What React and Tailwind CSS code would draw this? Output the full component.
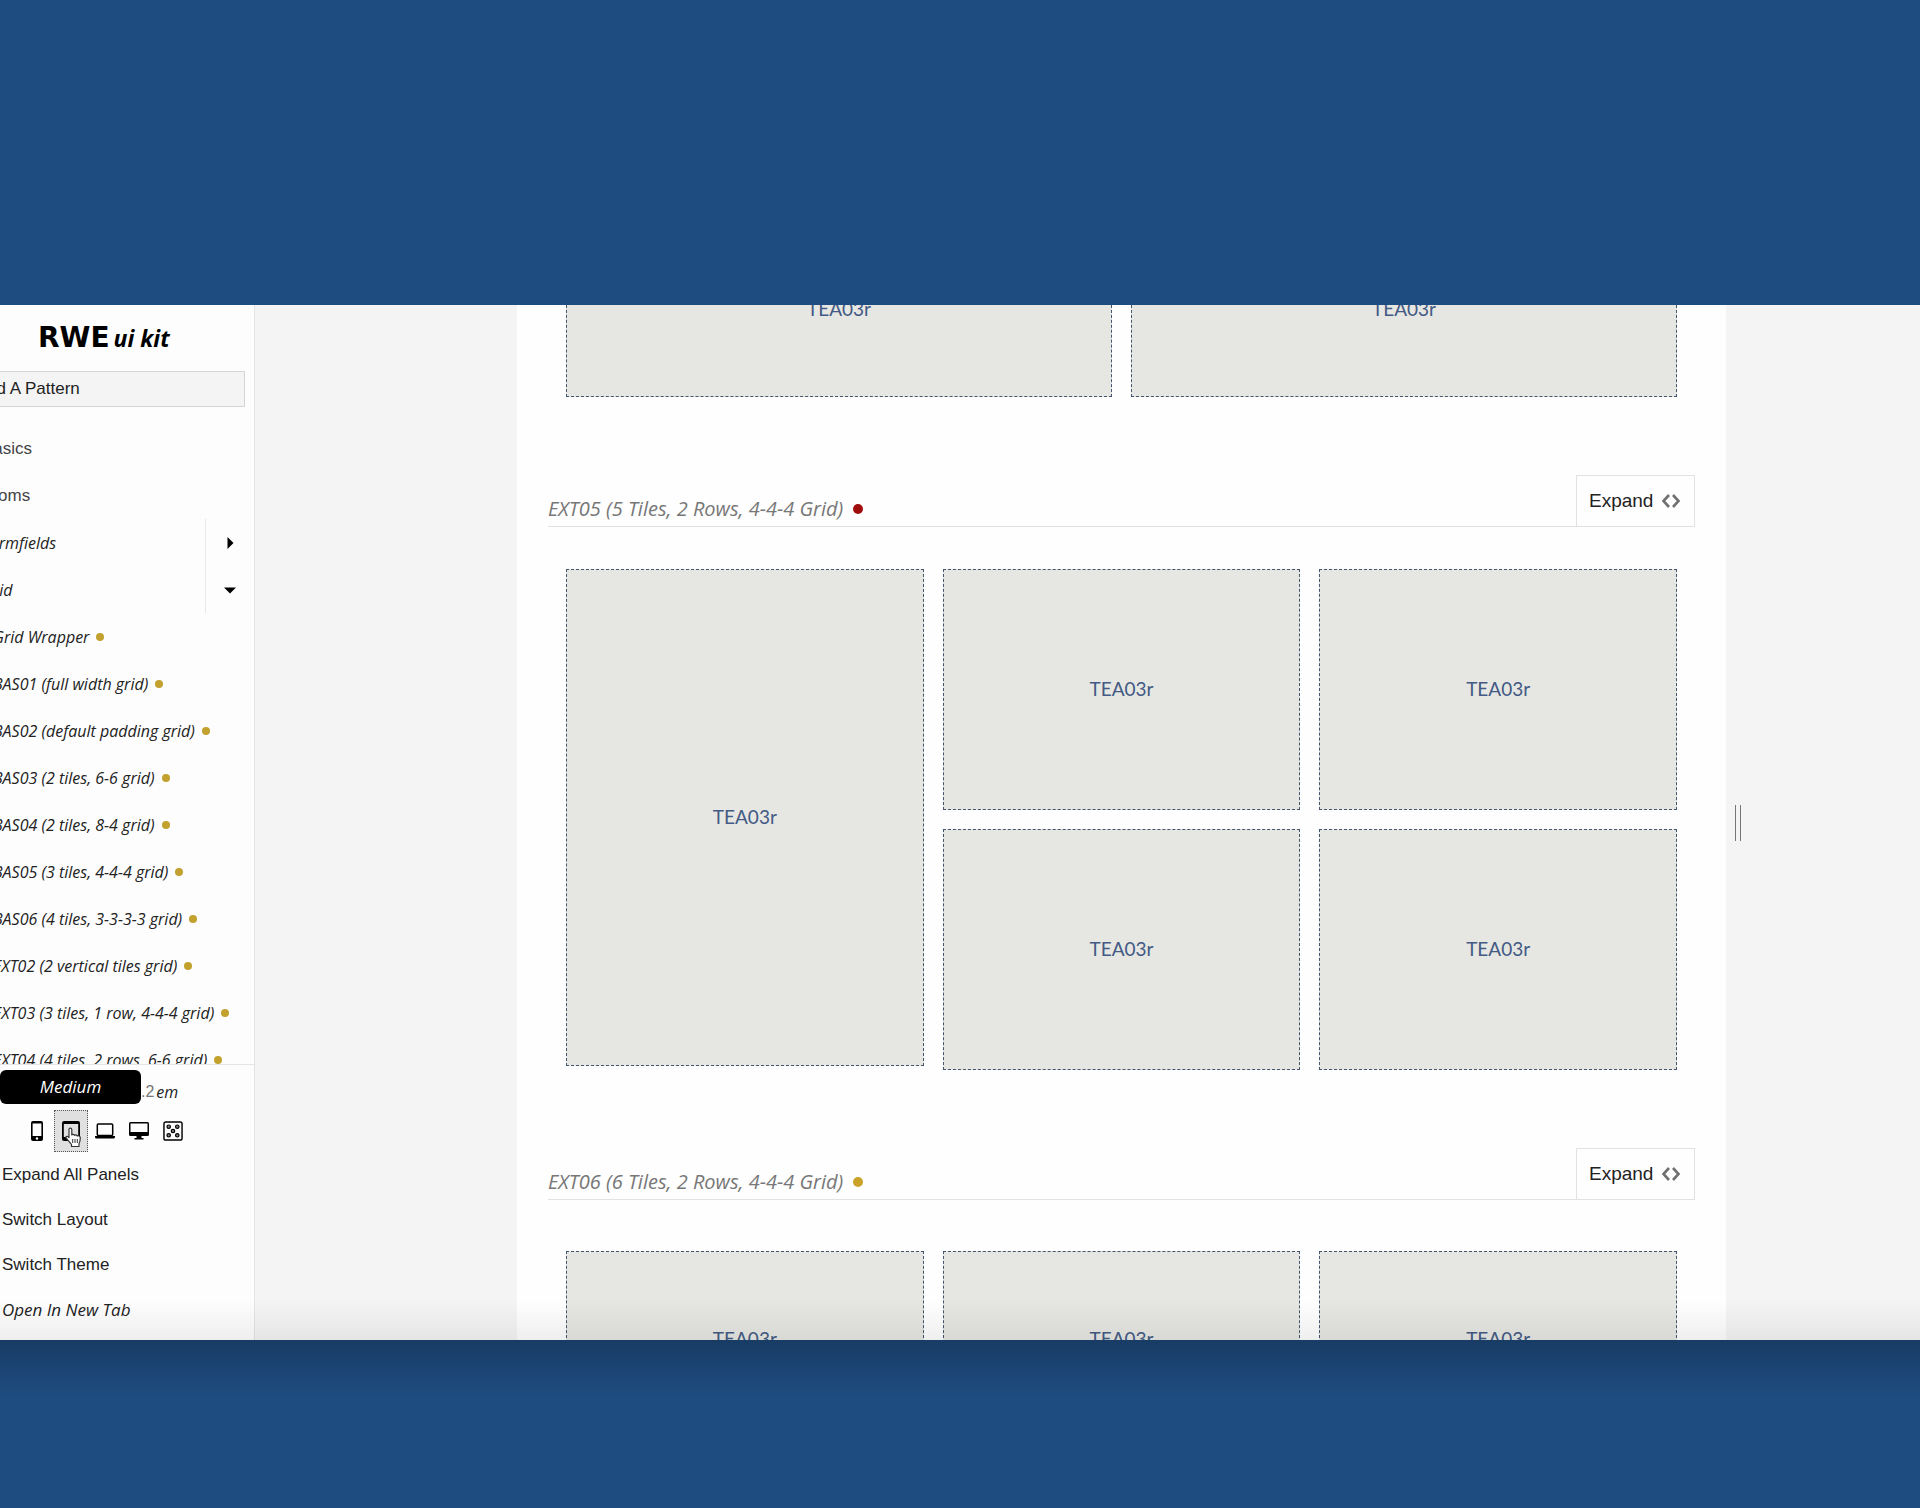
import React, { useState } from "react";

const PATTERNS = [
  "Grid Wrapper",
  "BAS01 (full width grid)",
  "BAS02 (default padding grid)",
  "BAS03 (2 tiles, 6-6 grid)",
  "BAS04 (2 tiles, 8-4 grid)",
  "BAS05 (3 tiles, 4-4-4 grid)",
  "BAS06 (4 tiles, 3-3-3-3 grid)",
  "EXT02 (2 vertical tiles grid)",
  "EXT03 (3 tiles, 1 row, 4-4-4 grid)",
  "EXT04 (4 tiles, 2 rows, 6-6 grid)",
];

const SIZES = [
  { key: "small", label: "Small", Icon: PhoneIcon },
  { key: "medium", label: "Medium", Icon: TabletIcon },
  { key: "large", label: "Large", Icon: LaptopIcon },
  { key: "xlarge", label: "Extra large", Icon: DesktopIcon },
  { key: "random", label: "Random", Icon: DiceIcon },
];

function PhoneIcon() {
  return (
    <svg width="12" height="20" viewBox="0 0 12 20" aria-hidden="true">
      <path fillRule="evenodd" d="M2 0h8a2 2 0 0 1 2 2v16a2 2 0 0 1-2 2H2a2 2 0 0 1-2-2V2a2 2 0 0 1 2-2zm-.4 2.500v12.500h8.800V2.500zM6 16.200a1.300 1.300 0 1 0 0 2.600 1.300 1.300 0 0 0 0-2.600z" />
    </svg>
  );
}

function TabletIcon() {
  return (
    <svg width="18" height="20" viewBox="0 0 18 20" aria-hidden="true">
      <path fillRule="evenodd" d="M2 0h14a2 2 0 0 1 2 2v16a2 2 0 0 1-2 2H2a2 2 0 0 1-2-2V2a2 2 0 0 1 2-2zm-.2 3v13h14.4V3z" />
    </svg>
  );
}

function LaptopIcon() {
  return (
    <svg width="20" height="16" viewBox="0 0 20 16" aria-hidden="true">
      <rect x="2.300" y="1" width="15.400" height="11.500" rx="1" fill="none" stroke="currentColor" strokeWidth="1.500" />
      <path d="M0 13h20v1a1.500 1.500 0 0 1-1.500 1.500h-17A1.500 1.500 0 0 1 0 14z" />
    </svg>
  );
}

function DesktopIcon() {
  return (
    <svg width="20" height="18" viewBox="0 0 20 18" aria-hidden="true">
      <path fillRule="evenodd" d="M1.500 0h17A1.500 1.500 0 0 1 20 1.500v11a1.500 1.500 0 0 1-1.500 1.500H12.500v2h2v1.500h-9V16h2v-2h-6A1.500 1.500 0 0 1 0 12.500v-11A1.500 1.500 0 0 1 1.500 0zm0 1.500v8.500h17v-8.500z" />
    </svg>
  );
}

function DiceIcon() {
  return (
    <svg width="20" height="20" viewBox="0 0 21 21" fill="none" stroke="currentColor" aria-hidden="true">
      <rect x="1" y="1" width="19" height="19" rx="2" strokeWidth="1.500" />
      {[[6, 6], [15, 6], [10.5, 10.5], [6, 15], [15, 15]].map(([cx, cy]) => (
        <circle key={`${cx}-${cy}`} cx={cx} cy={cy} r="1.800" fill="#888" strokeWidth="1.300" />
      ))}
    </svg>
  );
}

function HandCursor() {
  return (
    <svg className="pointer-events-none absolute top-4 left-2.5" width="17" height="21" viewBox="0 0 17 21" aria-hidden="true">
      <path
        d="M4 2.500C4 .600 6.600.600 6.800 2.500V8c.600-.900 2.300-.800 2.700.4.700-.8 2.200-.6 2.600.6 1.300-.8 3.200 0 3.200 1.800 0 3-.2 4.200-1.300 6v2.700H6.500v-2C5 15.500 3 13.500 1.200 11.200c-.8-1.500.8-2.500 2-1.500L4 10.500z"
        fill="#fff"
        stroke="#333"
        strokeWidth="1.200"
        strokeLinejoin="round"
      />
      <path d="M7.700 12v4M10 12v4M12.300 12v4" stroke="#333" strokeWidth="1" />
    </svg>
  );
}

function CodeIcon() {
  return (
    <svg width="20" height="14" viewBox="0 0 20 14" fill="none" stroke="#707070" strokeWidth="2.600" aria-hidden="true">
      <path d="M8 1 2.500 7 8 13M12 1l5.500 6L12 13" />
    </svg>
  );
}

function NavRow({ label, arrow }) {
  return (
    <li className="flex h-[47px] items-center font-['Open_Sans',sans-serif] text-base italic">
      <a href="#" className="flex-1 pl-[22px]">{label}</a>
      <button
        type="button"
        aria-label={`Toggle ${label}`}
        className="flex h-full w-[49px] items-center justify-center border-l border-[#e8e8e8]"
      >
        <svg width="12" height="12" viewBox="0 0 12 12" aria-hidden="true">
          {arrow === "right" ? <path d="M3.500 0v12l6-6z" /> : <path d="M0 3.500h12l-6 6z" />}
        </svg>
      </button>
    </li>
  );
}

function Sidebar() {
  const [query, setQuery] = useState("Find A Pattern");

  return (
    <aside className="-ml-10 flex w-[295px] shrink-0 flex-col border-r border-[#e4e4e4] text-[#222]">
      <a href="#" className="flex h-[66px] items-center gap-1 pl-[78px] text-black">
        <span className="font-['DejaVu_Sans',sans-serif] text-[28px] font-bold">RWE</span>
        <span className="font-['Open_Sans',sans-serif] text-[23px] font-bold italic">ui kit</span>
      </a>

      <input
        type="text"
        aria-label="Find a pattern"
        value={query}
        onChange={(ev) => setQuery(ev.target.value)}
        className="mr-[9px] h-9 shrink-0 border border-[#d5d5d5] bg-[#f4f4f4] pl-3 font-['Liberation_Sans',sans-serif] text-[17px]"
      />

      <nav className="mt-[18px] min-h-0 flex-1 overflow-hidden border-b border-[#e4e4e4]">
        <ul>
          {["Basics", "Atoms"].map((label) => (
            <li key={label} className="flex h-[47px] items-center pl-[22px] font-['Liberation_Sans',sans-serif] text-[17px] text-[#444]">
              <button type="button">{label}</button>
            </li>
          ))}
          <NavRow label="Formfields" arrow="right" />
          <NavRow label="Grid" arrow="down" />
          {PATTERNS.map((name) => (
            <li key={name} className="h-[47px] pl-[33px] font-['Open_Sans',sans-serif] text-base italic">
              <a href="#" className="flex h-full items-center gap-[7px] whitespace-nowrap">
                {name}
                <span className="size-2 rounded-full bg-[#c2a12f]" />
              </a>
            </li>
          ))}
        </ul>
      </nav>

      <div className="shrink-0 pb-[7px] pl-10 font-['Liberation_Sans',sans-serif] text-[17px]">
        <div className="mt-[5px] flex h-[34px] items-end">
          <div role="tooltip" className="flex h-full w-[141px] items-center justify-center rounded-md bg-black font-['Open_Sans',sans-serif] italic text-white">
            Medium
          </div>
          <span className="text-base text-[#777]">.2</span>
          <span className="pl-0.5 font-['Open_Sans',sans-serif] text-base italic">em</span>
        </div>

        <div className="mt-1.5 flex pl-5 text-black">
          {SIZES.map(({ key, label, Icon }) => (
            <button
              key={key}
              type="button"
              aria-label={label}
              className={`relative flex h-[42px] w-[34px] items-center justify-center ${
                key === "medium" ? "border border-dotted border-[#555] bg-[#e0e0e0]" : ""
              }`}
            >
              <Icon />
              {key === "medium" && <HandCursor />}
            </button>
          ))}
        </div>

        <div className="flex flex-col items-start pl-0.5">
          {["Expand All Panels", "Switch Layout", "Switch Theme"].map((label) => (
            <button key={label} type="button" className="h-[45px]">{label}</button>
          ))}
          <a href="#" className="flex h-[46px] items-center font-['Open_Sans',sans-serif] italic">Open In New Tab</a>
        </div>
      </div>
    </aside>
  );
}

function Tile({ className }) {
  return (
    <div
      className={`flex items-center justify-center border border-dashed border-[#46556e] bg-[#e6e7e2] font-['Lato',sans-serif] text-[19px] text-[#435a85] ${className}`}
    >
      TEA03r
    </div>
  );
}

function PatternHead({ title, dot }) {
  return (
    <div className="mx-[31px] mt-[78px] flex h-[52px] border-b border-[#e2e2e2]">
      <h2 className="flex flex-1 items-center gap-2.5 pt-4 font-['Open_Sans',sans-serif] text-xl italic text-[#777]">
        {title}
        <span className={`size-2.5 rounded-full ${dot}`} />
      </h2>
      <button
        type="button"
        className="flex w-[119px] items-center gap-2 border border-b-0 border-[#e2e2e2] pl-3 font-['Liberation_Sans',sans-serif] text-[19px] text-[#222]"
      >
        Expand
        <CodeIcon />
      </button>
    </div>
  );
}

export default function App() {
  return (
    <div className="flex h-screen flex-col overflow-hidden bg-[#1e4c80] pt-[305px] pb-[168px]">
      <div className="relative flex min-h-0 flex-1 bg-[#fdfdfd]">
        <Sidebar />

        <main className="flex min-w-0 flex-1 overflow-hidden bg-[#f4f4f4] pl-[262px]">
          <div className="min-w-0 flex-1 bg-[#fefefe]">
            <section className="-mt-[84px] grid grid-cols-2 gap-[19px] px-[49px]">
              <Tile className="h-44" />
              <Tile className="h-44" />
            </section>

            <section>
              <PatternHead title="EXT05 (5 Tiles, 2 Rows, 4-4-4 Grid)" dot="bg-[#a00d0d]" />
              <div className="mt-[42px] grid grid-cols-3 gap-[19px] px-[49px]">
                <Tile className="row-span-2 mb-1" />
                <Tile className="h-[241px]" />
                <Tile className="h-[241px]" />
                <Tile className="h-[241px]" />
                <Tile className="h-[241px]" />
              </div>
            </section>

            <section>
              <PatternHead title="EXT06 (6 Tiles, 2 Rows, 4-4-4 Grid)" dot="bg-[#c9a227]" />
              <div className="mt-[51px] grid grid-cols-3 gap-[19px] px-[49px]">
                {[1, 2, 3, 4, 5, 6].map((n) => (
                  <Tile key={n} className="h-44" />
                ))}
              </div>
            </section>
          </div>

          {/* Resize handle */}
          <div className="flex w-[194px] items-center pl-[9px]">
            <div className="h-9 w-1.5 cursor-ew-resize border-x border-[#777]" />
          </div>
        </main>

        {/* Shade on both sides of the lower edge */}
        <div className="pointer-events-none absolute inset-x-0 bottom-0 h-10 bg-gradient-to-t from-black/6 to-transparent" />
        <div className="pointer-events-none absolute inset-x-0 top-full h-14 bg-gradient-to-b from-[#183c64] to-transparent" />
      </div>
    </div>
  );
}
